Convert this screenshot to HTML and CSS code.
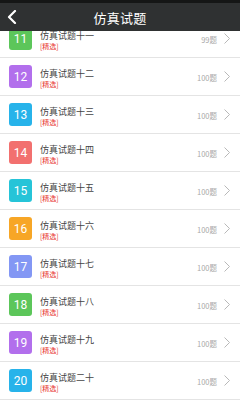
FILE: index.html
```html
<!DOCTYPE html>
<html lang="zh-CN">
<head>
  <meta charset="UTF-8" />
  <title>仿真试题</title>
  <link rel="stylesheet" href="styles.css">
</head>
<body>
  <div class="topbar">
    <svg class="back" width="10" height="14" viewBox="0 0 10 14">
      <path d="M8 1 L2 7 L8 13" fill="none" stroke="#fff" stroke-width="2.2" stroke-linecap="round" stroke-linejoin="round"/>
    </svg>
    <h1>仿真试题</h1>
  </div>

  <div class="viewport">
    <ul class="list" id="list"></ul>
  </div>

  <script>
    const items = [
      { n: 11, name: '仿真试题十一', count: 99, color: '#5cc65a' },
      { n: 12, name: '仿真试题十二', count: 100, color: '#b26fec' },
      { n: 13, name: '仿真试题十三', count: 100, color: '#27b3ea' },
      { n: 14, name: '仿真试题十四', count: 100, color: '#f2706f' },
      { n: 15, name: '仿真试题十五', count: 100, color: '#26c4d8' },
      { n: 16, name: '仿真试题十六', count: 100, color: '#f7a626' },
      { n: 17, name: '仿真试题十七', count: 100, color: '#8397f4' },
      { n: 18, name: '仿真试题十八', count: 100, color: '#5cc65a' },
      { n: 19, name: '仿真试题十九', count: 100, color: '#b26fec' },
      { n: 20, name: '仿真试题二十', count: 100, color: '#27b3ea' }
    ];

    const list = document.getElementById('list');
    list.innerHTML = items.map(it => `
      <li class="row">
        <span class="badge" style="background:${it.color}">${it.n}</span>
        <div class="info">
          <div class="name">${it.name}</div>
          <div class="tag">[精选]</div>
        </div>
        <span class="count">${it.count}题</span>
        <svg class="arrow" width="6" height="11" viewBox="0 0 6 11">
          <path d="M0.5 0.5 L5.5 5.5 L0.5 10.5" fill="none" stroke="#b8b8b8" stroke-width="1"/>
        </svg>
      </li>`).join('');
  </script>
</body>
</html>
```

FILE: styles.css
```css
body {
  margin: 0;
  height: 400px;
  overflow: hidden;
  background: #f2f2f2;
  font-family: "Noto Sans CJK SC", Roboto, sans-serif;
}

.topbar {
  position: relative;
  z-index: 1;
  height: 28px;
  border-top: 3px solid #151616;
  background: #2f3132;
  display: flex;
  align-items: center;
  justify-content: center;
}

.topbar h1 {
  margin: 0;
  color: #fff;
  font-size: 13px;
  font-weight: 400;
  letter-spacing: 0.3px;
}

.back {
  position: absolute;
  left: 7px;
  top: 7px;
}

.viewport {
  height: 369px;
  overflow: hidden;
}

.list {
  list-style: none;
  margin: -11px 0 0;
  padding: 0;
}

.row {
  height: 37px;
  background: #fff;
  border-bottom: 1px solid #e4e4e4;
  display: flex;
  align-items: center;
  padding: 0 9px;
}

.badge {
  width: 23px;
  height: 23px;
  border-radius: 3px;
  color: #fff;
  font-family: Roboto, sans-serif;
  font-size: 12px;
  display: flex;
  align-items: center;
  justify-content: center;
  flex-shrink: 0;
}

.info {
  flex: 1;
  margin-left: 8px;
  margin-top: 4px;
}

.name {
  color: #444;
  font-size: 9px;
  line-height: 11px;
  margin-bottom: 1px;
}

.tag {
  color: #e8322e;
  font-size: 7px;
  line-height: 9px;
}

.count {
  color: #a8a8a8;
  font-size: 7.5px;
  margin-right: 7px;
  margin-top: 1px;
}

.arrow {
  margin-right: 1px;
}
```
